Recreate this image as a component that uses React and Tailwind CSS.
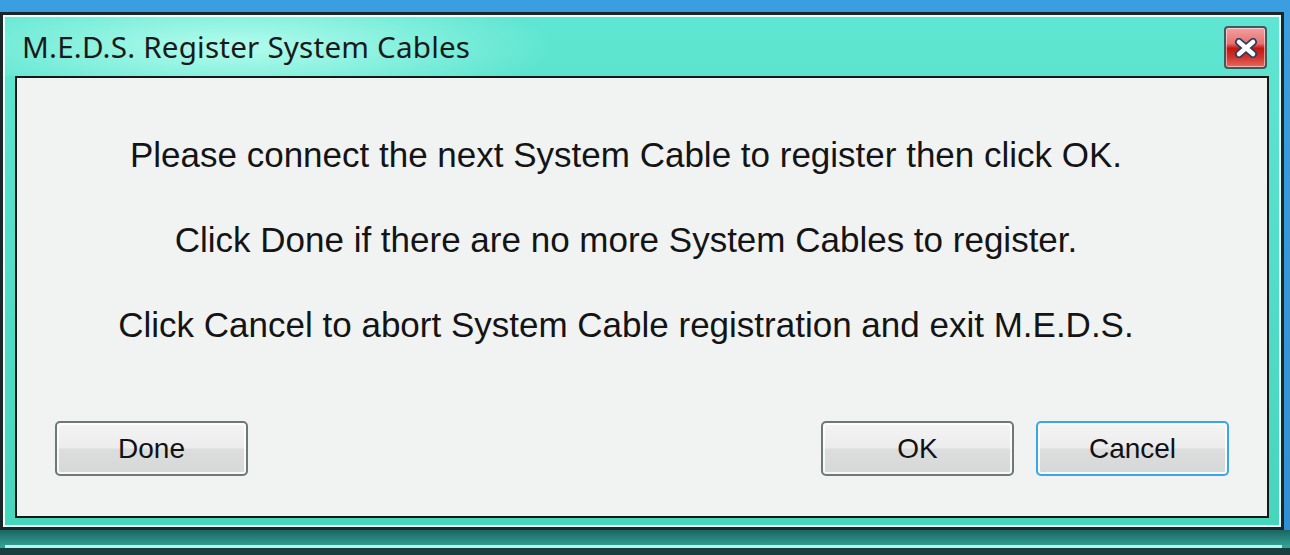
import React from "react";

const CloseButton = () => (
  <div className="w-[43px] h-[43px] rounded-[4px] border-2 border-[#3d5a5e] bg-[linear-gradient(to_bottom,#f3a0a0_0%,#e77070_40%,#c4170f_52%,#d0342c_75%,#e56a60_100%)] flex items-center justify-center shadow-[inset_0_0_0_1px_rgba(255,255,255,0.5)]">
    <svg width="24" height="20" viewBox="0 0 24 20">
      <path d="M5 4 L19 16 M19 4 L5 16" stroke="#2a3d66" strokeWidth="8" strokeLinecap="round" />
      <path d="M5 4 L19 16 M19 4 L5 16" stroke="#ffffff" strokeWidth="4.5" strokeLinecap="round" />
    </svg>
  </div>
);

const DialogButton = ({ label, focused }) => (
  <button
    className={
      "w-[193px] h-[55px] rounded-[5px] border-2 text-[28px] text-[#111] bg-[linear-gradient(to_bottom,#f4f4f4_0%,#ececec_48%,#dcdddd_52%,#d6d8d8_100%)] shadow-[inset_0_0_0_2px_rgba(255,255,255,0.8)] " +
      (focused ? "border-[#3aa6e8]" : "border-[#6f7777]")
    }
    style={{ fontFamily: '"Liberation Sans", Arial, sans-serif' }}
  >
    {label}
  </button>
);

export default function App() {
  return (
    <div className="w-[1290px] h-[555px] overflow-hidden bg-[linear-gradient(to_bottom,#3a9ee0,#2f8fd6)] flex flex-col">
      <div className="flex h-[530px] pt-[12px]">
        {/* window */}
        <div className="w-[1284px] h-[518px] border-[3px] border-[#1b2628] bg-[#1b2628]">
          <div className="h-full border-2 border-[#e8fffb] bg-[linear-gradient(to_bottom,#5fe6d2,#4fdcc6_60%,#46d6bc)] flex flex-col">
            {/* title bar */}
            <div className="h-[59px] flex items-center justify-between pl-[17px] pr-[12px] pt-[2px] bg-[radial-gradient(ellipse_320px_60px_at_230px_30px,rgba(190,255,240,0.9),rgba(190,255,240,0)_100%)]">
              <span
                className="text-[29.6px] text-[#1a1a1a] tracking-[0.2px]"
                style={{ fontFamily: '"Noto Sans", "Open Sans", sans-serif' }}
              >
                M.E.D.S. Register System Cables
              </span>
              <CloseButton />
            </div>
            {/* content panel */}
            <div className="mx-[10px] mb-[7px] flex-1 border-2 border-[#141818] bg-[#f1f3f3] flex flex-col">
              <div
                className="pt-[34px] pr-[32px] flex flex-col items-center text-[35px] leading-[85px] text-[#141414]"
                style={{ fontFamily: '"Liberation Sans", Arial, sans-serif' }}
              >
                <p>Please connect the next System Cable to register then click OK.</p>
                <p>Click Done if there are no more System Cables to register.</p>
                <p>Click Cancel to abort System Cable registration and exit M.E.D.S.</p>
              </div>
              <div className="mt-auto mb-[40px] px-[38px] flex items-center">
                <DialogButton label="Done" />
                <div className="flex-1" />
                <div className="flex gap-[22px]">
                  <DialogButton label="OK" />
                  <DialogButton label="Cancel" focused />
                </div>
              </div>
            </div>
          </div>
        </div>
        <div className="flex-1" />
      </div>
      {/* window behind */}
      <div className="flex-1 bg-[linear-gradient(to_bottom,#1c6460,#2f9d90_60%,#3fb6a6)] flex flex-col justify-end">
        <div className="ml-[5px] mr-[8px] h-[3px] bg-[#b8f5e8]" />
        <div className="h-[7px] bg-[#173f40]" />
      </div>
    </div>
  );
}
